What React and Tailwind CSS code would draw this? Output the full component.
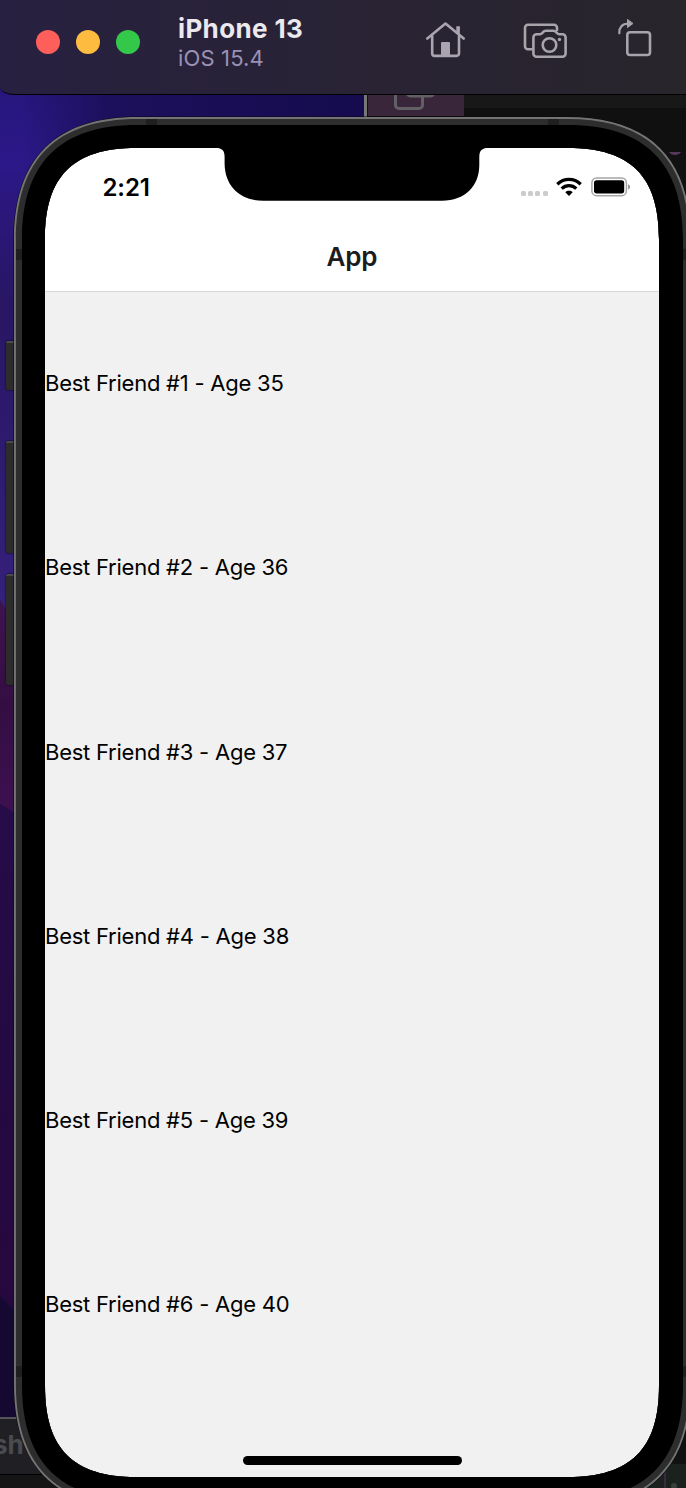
import React from "react";

const friends = [
  { name: "Best Friend #1", age: 35 },
  { name: "Best Friend #2", age: 36 },
  { name: "Best Friend #3", age: 37 },
  { name: "Best Friend #4", age: 38 },
  { name: "Best Friend #5", age: 39 },
  { name: "Best Friend #6", age: 40 },
];

// Rectangle with smooth corners that reach a px along each side.
function smoothRect(x0, y0, x1, y1, a, tension) {
  const k = a * tension;
  return [
    `M${x0 + a} ${y0}H${x1 - a}`,
    `C${x1 - k} ${y0} ${x1} ${y0 + k} ${x1} ${y0 + a}`,
    `V${y1 - a}`,
    `C${x1} ${y1 - k} ${x1 - k} ${y1} ${x1 - a} ${y1}`,
    `H${x0 + a}`,
    `C${x0 + k} ${y1} ${x0} ${y1 - k} ${x0} ${y1 - a}`,
    `V${y0 + a}`,
    `C${x0} ${y0 + k} ${x0 + k} ${y0} ${x0 + a} ${y0}Z`,
  ].join("");
}

const shadow = smoothRect(-0.6, -0.6, 677.6, 1391.6, 125, 0.333);
const outer = smoothRect(0, 0, 677, 1391, 124, 0.333);
const rim = smoothRect(1.9, 1.9, 675.1, 1389.1, 121.8, 0.333);
const face = smoothRect(8, 8, 669, 1383, 115, 0.331);
const hole = smoothRect(31, 31, 645, 1360, 91, 0.31);

function DeviceFrame() {
  return (
    <svg className="pointer-events-none absolute top-0 left-0 overflow-visible" width="677" height="1391" viewBox="0 0 677 1391" fillRule="evenodd">
      <path d={shadow + hole} fill="#0a0910" />
      <path d={outer + hole} fill="#747474" />
      <path d={rim + hole} fill="#2d2d2d" />
      <path d="M132 2h11v6h-11zM534 2h11v6h-11zM2 132h6v11H2zM2 1249h6v11H2zM669 132h6v11h-6zM669 1249h6v11h-6z" fill="#1f1f1f" />
      <path d={face + hole} fill="#000" />
      <path d="M202 30v1C208 31 210.600 33.500 210.600 40V47C211 69 226 83.700 249 83.700H428C451 83.700 465.300 69 465.300 48V40C465.300 33.500 468 31 474 31v-1z" fill="#000" />
    </svg>
  );
}

function HomeIcon() {
  return (
    <svg width="40" height="38" viewBox="426 21 40 38" fill="none" stroke="#aaa4b0" strokeWidth="2.6" strokeLinecap="round" strokeLinejoin="round">
      <path d="M427.300 38.500 445.500 23.600 463.700 38.500" />
      <path d="M432.200 36v17.500a2.400 2.400 0 0 0 2.400 2.400h22a2.400 2.400 0 0 0 2.400-2.400V36" />
      <path d="M456.300 26.200h3.600v8l-3.600-3z" fill="#aaa4b0" stroke="none" />
      <path d="M442 42h7a1 1 0 0 1 1 1v13h-9V43a1 1 0 0 1 1-1z" fill="#aaa4b0" stroke="none" />
    </svg>
  );
}

function ScreenshotIcon() {
  return (
    <svg width="46" height="38" viewBox="522 21 46 38" fill="none" stroke="#a8a4ac" strokeWidth="2.600" strokeLinecap="round" strokeLinejoin="round">
      <path d="M531.500 49.300h-3.500a3 3 0 0 1-3-3V27.800a3 3 0 0 1 3-3h26a3 3 0 0 1 3 3v2.200" />
      <path d="M536.600 34.200h3.600c1.600 0 2-.8 2.800-1.900.800-1.100 1.500-1.500 2.800-1.500h7.600c1.300 0 2 .4 2.800 1.500.800 1.100 1.200 1.900 2.800 1.900h3.400a3.200 3.200 0 0 1 3.200 3.200v16.200a3.200 3.200 0 0 1-3.200 3.200h-25.800a3.200 3.200 0 0 1-3.200-3.200V37.400a3.200 3.200 0 0 1 3.200-3.200z" />
      <circle cx="549.500" cy="45" r="6.800" />
      <circle cx="559.500" cy="39.500" r="1.700" fill="#a8a4ac" stroke="none" />
    </svg>
  );
}

function RotateIcon() {
  return (
    <svg width="36" height="40" viewBox="617 18 36 40" fill="none" stroke="#a8a4ac" strokeWidth="2.600" strokeLinecap="round" strokeLinejoin="round">
      <rect x="627.300" y="32.300" width="22.700" height="22.700" rx="2.800" />
      <path d="M619.300 33.300c0-6 3-9.600 8.700-9.600" strokeWidth="2.200" />
      <path d="M627.500 19.800v7.700l5.200-3.800z" fill="#a8a4ac" strokeWidth="1" />
    </svg>
  );
}

function WifiIcon() {
  return (
    <svg width="26" height="20" viewBox="0 0 26 20" fill="none" stroke="#000" strokeWidth="3.300">
      <path d="M1.300 7.300C8 .8 18 .8 24.700 7.300" />
      <path d="M5.700 11.600c4.200-4 10.400-4 14.600 0" />
      <path d="M9.300 15.200c2-1.900 5.400-1.900 7.400 0L13 18.900z" fill="#000" stroke="none" />
    </svg>
  );
}

function BatteryIcon() {
  return (
    <svg width="40" height="20" viewBox="0 0 40 20">
      <rect x="0.900" y="0.900" width="34.500" height="17.800" rx="4.800" fill="none" stroke="#a5a5a5" strokeWidth="1.500" />
      <rect x="3" y="3.200" width="30.200" height="13.200" rx="2.600" fill="#000" />
      <path d="M37 7.200c2.800.8 2.800 4.600 0 5.400z" fill="#999" />
    </svg>
  );
}

function TitleBar() {
  return (
    <header className="relative z-10 flex h-[95px] shrink-0 items-start border-b border-black bg-linear-to-r from-[#272040] via-[#292334] via-55% to-[#28252b] [border-bottom-left-radius:15px_8px]">
      <div className="flex gap-4 pt-[30px] pl-9">
        <span className="size-6 rounded-full bg-[#fe5f5b]" />
        <span className="size-6 rounded-full bg-[#fdbb40]" />
        <span className="size-6 rounded-full bg-[#34c84a]" />
      </div>
      <div className="ml-[38px] w-[248px] pt-[13px] whitespace-nowrap">
        <div className="text-[26px] leading-8 font-bold tracking-[0.36px] text-[#ebe9ed]">iPhone 13</div>
        <div className="text-[22px] leading-[27px] tracking-[0.15px] text-[#9b91b5]">iOS 15.4</div>
      </div>
      <div className="pt-[21px]"><HomeIcon /></div>
      <div className="ml-14 pt-[21px]"><ScreenshotIcon /></div>
      <div className="ml-[49px] pt-[18px]"><RotateIcon /></div>
    </header>
  );
}

// Wallpaper and the windows that show from behind the simulator.
function Desktop() {
  return (
    <div className="absolute inset-0 overflow-hidden bg-[#111111]">
      <svg width="686" height="1488" viewBox="0 0 686 1488">
        <defs>
          <linearGradient id="sky" x1="0" y1="80" x2="0" y2="700" gradientUnits="userSpaceOnUse">
            <stop offset="0" stopColor="#25167b" />
            <stop offset="0.130" stopColor="#2c1888" />
            <stop offset="0.360" stopColor="#281664" />
            <stop offset="0.850" stopColor="#35207b" />
          </linearGradient>
          <linearGradient id="shade" x1="0" x2="364" y1="0" y2="0" gradientUnits="userSpaceOnUse">
            <stop offset="0.060" stopColor="#1c105c" stopOpacity="0" />
            <stop offset="0.300" stopColor="#1c105c" />
            <stop offset="1" stopColor="#150b4e" />
          </linearGradient>
          <linearGradient id="plum" x1="0" y1="600" x2="0" y2="810" gradientUnits="userSpaceOnUse">
            <stop offset="0" stopColor="#3f1250" />
            <stop offset="0.500" stopColor="#340e43" />
            <stop offset="1" stopColor="#3d1050" />
          </linearGradient>
          <linearGradient id="night" x1="0" y1="790" x2="0" y2="1418" gradientUnits="userSpaceOnUse">
            <stop offset="0" stopColor="#260c49" />
            <stop offset="0.400" stopColor="#230a42" />
            <stop offset="0.780" stopColor="#27083f" />
            <stop offset="1" stopColor="#1f083c" />
          </linearGradient>
        </defs>
        <path d="M0 80h364v900H0z" fill="url(#sky)" />
        <path d="M0 80h364v90H0z" fill="url(#shade)" />
        <path d="M0 600l24 36v180H0z" fill="url(#plum)" />
        <path d="M0 804l24 14v600H0z" fill="url(#night)" />
        <path d="M0 1296l24 24v98H0z" fill="#150831" />
        <path d="M364 80h3v40h-3z" fill="#777" />
        <path d="M367 80h1v40h-1z" fill="#111" />
        <path d="M368 80h96v36h-96z" fill="#3a263a" />
        <g fill="none" stroke="#626064" strokeWidth="3">
          <path d="M395.500 80v25a3.500 3.500 0 0 0 3.500 3.500h20a3.500 3.500 0 0 0 3.500-3.500V96" />
          <path d="M407 93q1 3 4 3h19q3 0 4-3" />
        </g>
        <path d="M464 80h222v28H464z" fill="#181818" />
        <path d="M464 108h222v44H464z" fill="#101010" />
        <path d="M669 152h12q-2 3-6 3t-6-3z" fill="#58385a" />
        <path d="M0 1417h70v2H0z" fill="#55545a" />
        <path d="M0 1419h70v55H0z" fill="#202024" />
        <path d="M0 1474h90v14H0z" fill="#151515" />
        <path d="M0 1474h90v1H0z" fill="#000" />
        <path d="M640 1464h46v24h-46z" fill="#1b211d" />
        <path d="M664 1464h2v24h-2z" fill="#3b2a40" />
        <circle cx="674" cy="1486" r="3" fill="#39403b" />
      </svg>
      <span className="absolute top-[1429px] -left-[7px] text-[26px] leading-8 font-bold text-[#4b4a4f]">sh</span>
    </div>
  );
}

function SideButtons() {
  return (
    <div className="flex w-[14px] shrink-0 flex-col items-end pt-[224px]">
      <span className="h-[49px] w-2 rounded-l-[2px] border-t-2 border-[#4a4a4a] bg-[#2c2c2c] shadow-[0_0_2px_#000]" />
      <span className="mt-[51px] h-[112px] w-2 rounded-l-[2px] border-t-2 border-[#4a4a4a] bg-[#2c2c2c] shadow-[0_0_2px_#000]" />
      <span className="mt-[21px] h-[111px] w-2 rounded-l-[2px] border-t-2 border-[#4a4a4a] bg-[#2c2c2c] shadow-[0_0_2px_#000]" />
    </div>
  );
}

function StatusBar() {
  return (
    <div className="flex h-[74px] items-start justify-between pr-7 pl-[57.500px]">
      <span className="pt-[25px] text-[24px] leading-[30px] font-semibold tracking-[-0.1px] text-black">2:21</span>
      <div className="flex items-start pt-[29px]">
        <div className="mt-[13.500px] mr-[8.500px] flex gap-[2.300px]">
          <span className="size-[5px] rounded-[1.500px] bg-[#cccccc]" />
          <span className="size-[5px] rounded-[1.500px] bg-[#cccccc]" />
          <span className="size-[5px] rounded-[1.500px] bg-[#cccccc]" />
          <span className="size-[5px] rounded-[1.500px] bg-[#cccccc]" />
        </div>
        <WifiIcon />
        <div className="ml-[9px]"><BatteryIcon /></div>
      </div>
    </div>
  );
}

export default function App() {
  return (
    <div className="relative flex h-[1488px] w-[686px] flex-col overflow-hidden font-['Inter',sans-serif]">
      <Desktop />
      <TitleBar />
      <div className="relative flex pt-[22px]">
        <SideButtons />
        <div className="relative h-[1391px] w-[677px] shrink-0 pt-[31px] pl-[31px]">
          <main className="flex h-[1329px] w-[614px] flex-col rounded-[60px] bg-[#f1f1f1]">
            <div className="h-[144px] rounded-t-[60px] border-b border-[#d8d8d8] bg-white">
              <StatusBar />
              <h1 className="pt-[19px] text-center text-[26px] leading-8 font-semibold tracking-[-0.2px] text-[#1c1c1e]">App</h1>
            </div>
            <ul className="-mt-[0.600px] text-[22px] tracking-[-0.24px] text-black">
              {friends.map((f) => (
                <li key={f.name} className="flex h-[184.250px] items-center">
                  {f.name} - Age {f.age}
                </li>
              ))}
            </ul>
            <div className="mt-[59.300px] h-[8.500px] w-[219px] shrink-0 self-center rounded-full bg-black" />
          </main>
          <DeviceFrame />
        </div>
      </div>
    </div>
  );
}
